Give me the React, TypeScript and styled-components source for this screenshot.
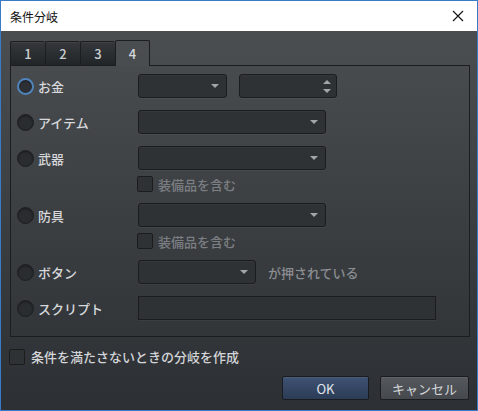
import React from 'react';
import styled, {createGlobalStyle, css} from 'styled-components';

const GlobalStyle = createGlobalStyle`
  html, body {
    margin: 0;
    padding: 0;
    background: #ffffff;
  }
  * {
    box-sizing: border-box;
  }
`;

const FONT = `"Noto Sans CJK JP", "Noto Sans", sans-serif`;

const Window = styled.div`
  width: 478px;
  height: 411px;
  border: 1px solid #3a7bc8;
  display: flex;
  flex-direction: column;
  font-family: ${FONT};
`;

const TitleBar = styled.div`
  height: 30px;
  background: #ffffff;
  display: flex;
  align-items: center;
  justify-content: space-between;
  padding: 0 9px 0 9px;
  font-size: 12px;
  color: #111;
`;

const CloseBtn = styled.div`
  width: 12px;
  height: 12px;
  margin-right: 4px;
  display: flex;
`;

const Body = styled.div`
  flex: 1;
  display: flex;
  flex-direction: column;
  padding: 9px 7px 8px 9px;
  background: linear-gradient(to bottom, #4b4e51 0%, #3d4043 45%, #2c2f33 100%);
`;

const TabRow = styled.div`
  display: flex;
  height: 25px;
  align-items: flex-end;
`;

const Tab = styled.div<{ $active?: boolean }>`
  width: 35px;
  height: 24px;
  display: flex;
  align-items: center;
  justify-content: center;
  border: 1px solid #1b1d1f;
  border-bottom: none;
  border-right: none;
  border-radius: 2px 2px 0 0;
  font-size: 13px;
  font-weight: 500;
  color: #c9ccd0;
  background: linear-gradient(to bottom, #34373b, #222528);
  box-shadow: inset 0 1px 0 rgba(255, 255, 255, 0.06);

  ${(p) =>
    p.$active &&
    css`
      height: 26px;
      border-right: 1px solid #1b1d1f;
      margin-bottom: -1px;
      position: relative;
      z-index: 1;
      background: #4a4d50;
      box-shadow: none;
      color: #d6d9dc;
    `}
`;

const Panel = styled.div`
  height: 272px;
  border: 1px solid #1b1d1f;
  padding: 8px 6px 0 6px;
  display: flex;
  flex-direction: column;
  gap: 12px;
`;

const Row = styled.div`
  display: grid;
  grid-template-columns: 121px auto 1fr;
  align-items: center;
  height: 24px;
`;

const SubRow = styled.div`
  display: flex;
  align-items: center;
  height: 16px;
  margin: -6px 0 -1px 120px;
  gap: 5px;
`;

const LabelCell = styled.label`
  display: flex;
  align-items: center;
  gap: 4px;
  font-size: 13px;
  font-weight: 500;
  color: #d6d8db;
`;

const Radio = styled.span<{ $checked?: boolean }>`
  width: 17px;
  height: 17px;
  border-radius: 50%;
  background: #2a2d30;
  border: 1px solid #1d1f22;
  box-shadow: inset 0 1px 2px rgba(0, 0, 0, 0.4);

  ${(p) =>
    p.$checked &&
    css`
      border: 2px solid #4f84bd;
      background: #2c2f33;
    `}
`;

const Controls = styled.div`
  display: flex;
  align-items: center;
  gap: 12px;
`;

const Field = styled.div<{ $w: number }>`
  position: relative;
  width: ${(p) => p.$w}px;
  height: 24px;
  background: #2f3235;
  border: 1px solid #1a1c1e;
  border-radius: 3px;
  box-shadow: 0 1px 0 rgba(255, 255, 255, 0.04), inset 0 1px 0 rgba(255, 255, 255, 0.03);
`;

const Arrow = styled.span`
  position: absolute;
  right: 7px;
  top: 9px;
  width: 0;
  height: 0;
  border-left: 4px solid transparent;
  border-right: 4px solid transparent;
  border-top: 4px solid #a3a6a9;
`;

const SpinUp = styled.span`
  position: absolute;
  right: 5px;
  top: 5px;
  width: 0;
  height: 0;
  border-left: 4px solid transparent;
  border-right: 4px solid transparent;
  border-bottom: 4px solid #a3a6a9;
`;

const SpinDown = styled(SpinUp)`
  top: 14px;
  border-bottom: none;
  border-top: 4px solid #a3a6a9;
`;

const TextBox = styled.div<{ $w: number }>`
  width: ${(p) => p.$w}px;
  height: 24px;
  background: #2f3235;
  border: 1px solid #1a1c1e;
  box-shadow: 0 1px 0 rgba(255, 255, 255, 0.04);
`;

const Check = styled.span`
  width: 16px;
  height: 16px;
  background: #2f3235;
  border: 1px solid #1a1c1e;
  border-radius: 2px;
  flex-shrink: 0;
`;

const MutedText = styled.span<{ $tone?: 'dim' | 'mid' | 'light' }>`
  font-size: 13px;
  font-weight: 500;
  color: ${(p) => (p.$tone === 'light' ? '#d3d5d8' : p.$tone === 'mid' ? '#8a8d91' : '#7b7e82')};
`;

const BottomCheck = styled.div`
  display: flex;
  align-items: center;
  gap: 6px;
  margin: 11px 0 0 -1px;
  height: 17px;
`;

const Buttons = styled.div`
  display: flex;
  justify-content: flex-end;
  gap: 11px;
  margin-top: 11px;
  padding-right: 1px;
`;

const Button = styled.div<{ $primary?: boolean }>`
  width: ${(p) => (p.$primary ? 87 : 89)}px;
  height: 24px;
  display: flex;
  align-items: center;
  justify-content: center;
  border: 1px solid #1a1c1f;
  border-radius: 2px;
  font-size: 13px;
  color: #d4d7da;
  background: linear-gradient(to bottom, #55595d, #45484c);
  box-shadow: inset 0 1px 0 rgba(255, 255, 255, 0.06);

  ${(p) =>
    p.$primary &&
    css`
      color: #e1e6ec;
      background: linear-gradient(to bottom, #3e5272, #2c3c56);
    `}
`;

const rows = [
    {label: 'お金', kind: 'money'},
    {label: 'アイテム', kind: 'select'},
    {label: '武器', kind: 'select', sub: true},
    {label: '防具', kind: 'select', sub: true},
    {label: 'ボタン', kind: 'button'},
    {label: 'スクリプト', kind: 'text'},
];

export default function App() {
    return (
        <>
            <GlobalStyle/>
            <Window>
                <TitleBar>
                    <span>条件分岐</span>
                    <CloseBtn>
                        <svg width="12" height="12" viewBox="0 0 12 12">
                            <path d="M1 1L11 11M11 1L1 11" stroke="#111" strokeWidth="1.1"/>
                        </svg>
                    </CloseBtn>
                </TitleBar>
                <Body>
                    <TabRow>
                        <Tab>1</Tab>
                        <Tab>2</Tab>
                        <Tab>3</Tab>
                        <Tab $active>4</Tab>
                    </TabRow>
                    <Panel>
                        {rows.map((r, i) => (
                            <React.Fragment key={r.label}>
                                <Row>
                                    <LabelCell>
                                        <Radio $checked={i === 0}/>
                                        {r.label}
                                    </LabelCell>
                                    <Controls>
                                        {r.kind === 'money' && (
                                            <>
                                                <Field $w={89}><Arrow/></Field>
                                                <Field $w={98}><SpinUp/><SpinDown/></Field>
                                            </>
                                        )}
                                        {r.kind === 'select' && <Field $w={188}><Arrow/></Field>}
                                        {r.kind === 'button' && (
                                            <>
                                                <Field $w={118}><Arrow/></Field>
                                                <MutedText $tone="mid">が押されている</MutedText>
                                            </>
                                        )}
                                        {r.kind === 'text' && <TextBox $w={298}/>}
                                    </Controls>
                                </Row>
                                {r.sub && (
                                    <SubRow>
                                        <Check/>
                                        <MutedText>装備品を含む</MutedText>
                                    </SubRow>
                                )}
                            </React.Fragment>
                        ))}
                    </Panel>
                    <BottomCheck>
                        <Check/>
                        <MutedText $tone="light">条件を満たさないときの分岐を作成</MutedText>
                    </BottomCheck>
                    <Buttons>
                        <Button $primary>OK</Button>
                        <Button>キャンセル</Button>
                    </Buttons>
                </Body>
            </Window>
        </>
    );
}
